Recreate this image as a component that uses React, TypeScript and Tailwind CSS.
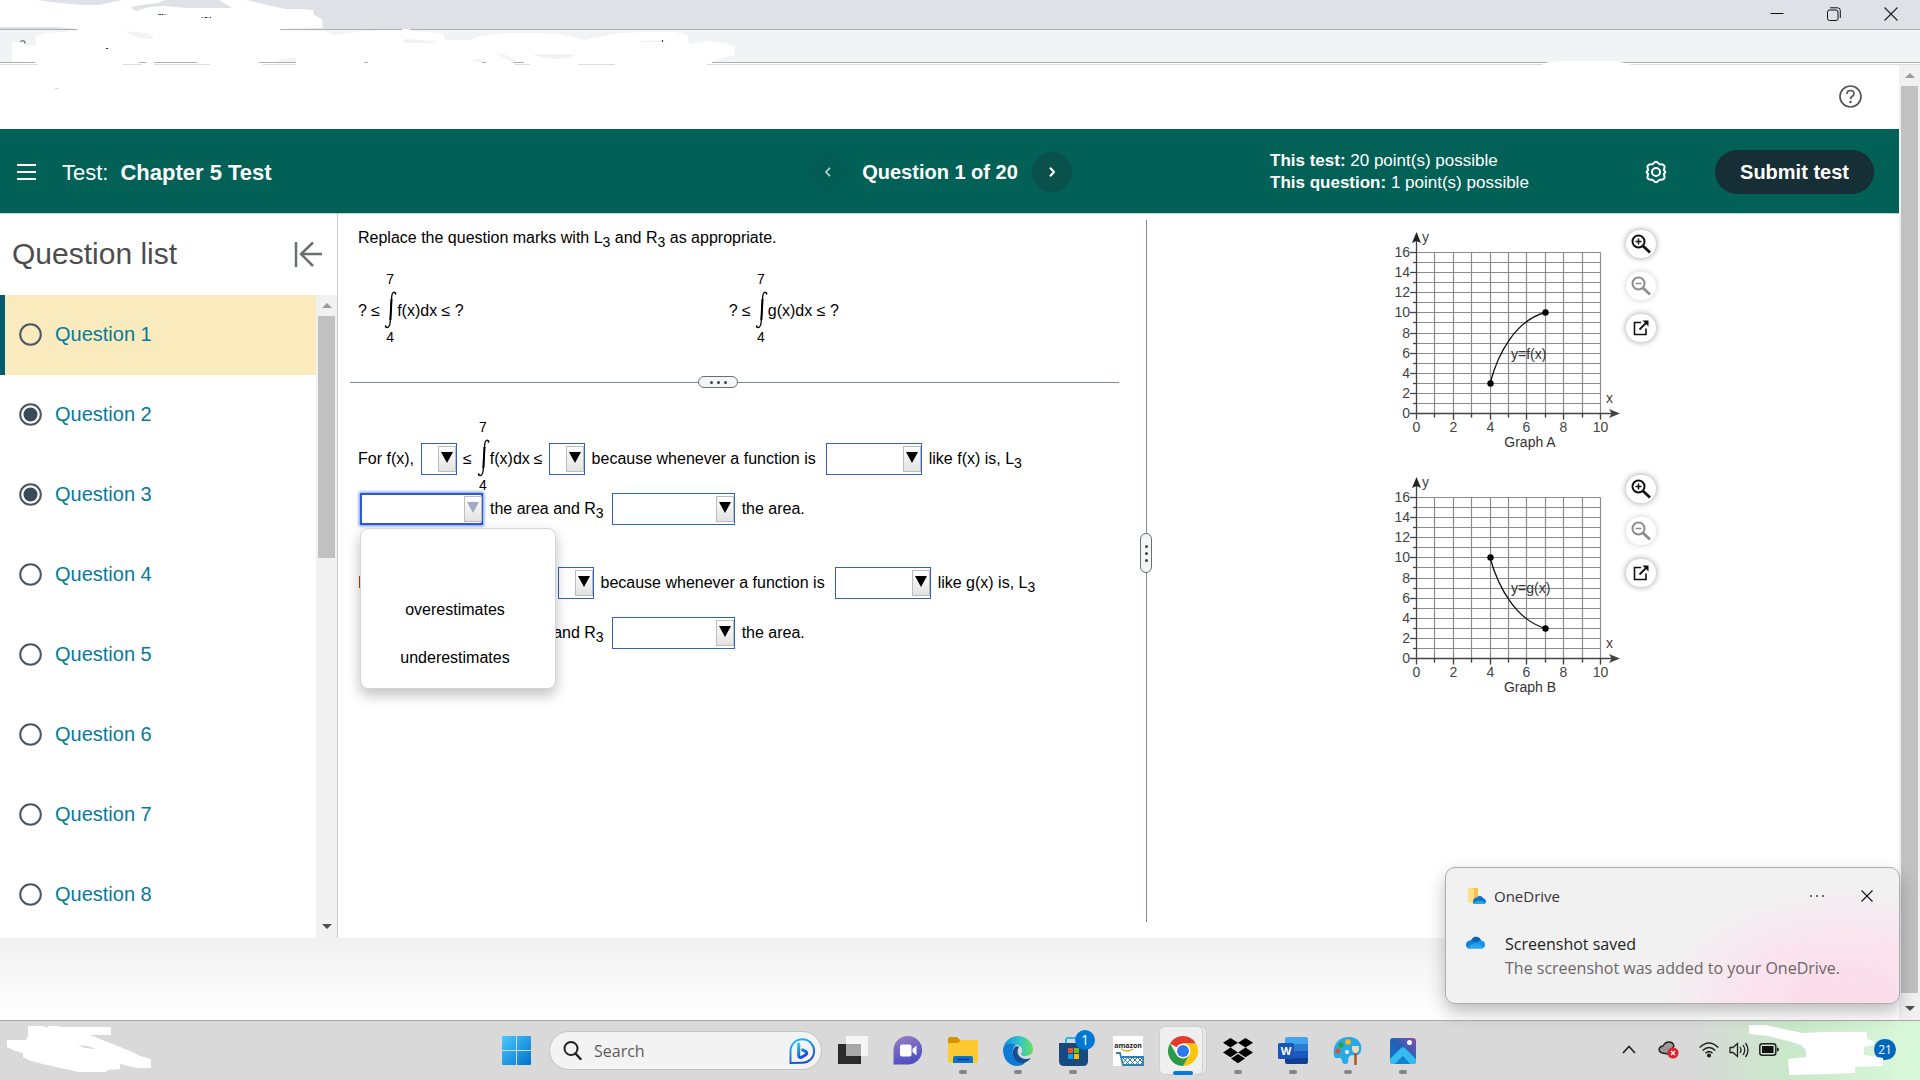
import React from "react";

const GRID_X = 18.4;
const GRID_Y = 10.06;
const X0 = 26;
const Y0 = 193;

function Integral() {
  return (
    <span className="-mt-2 flex w-3 shrink-0 flex-col items-center text-sm leading-4">
      <span className="h-[21px] leading-[18px]">7</span>
      <svg width="14" height="38" viewBox="0 0 14 38" fill="none" stroke="#000">
        <path d="M13 2.5C11-.2 9 1.600 8.700 5.500L7.200 31C6.900 36 4.600 38 2.200 35.500" strokeWidth="1.300" />
        <path d="M8.500 8L7.400 29" strokeWidth="2" />
        <circle cx="12.500" cy="2.800" r=".9" fill="#000" stroke="none" />
        <circle cx="2.700" cy="35.200" r=".9" fill="#000" stroke="none" />
      </svg>
      <span className="h-4">4</span>
    </span>
  );
}

function Sub3() {
  return <sub className="text-sm leading-[0]">3</sub>;
}

function Drop({ label, size, options = [], open = false }: { label: string; size: string; options?: string[]; open?: boolean }) {
  return (
    <span className={"relative block h-8 shrink-0 " + size}>
      <select
        aria-label={label}
        className={
          "block h-8 w-full appearance-none bg-white outline-none " +
          (open ? "border-2 border-[#2a5bd0] shadow-[0_0_3px_1px_#6f93e8]" : "border border-[#2f5fc8]")
        }
      >
        <option value=""></option>
        {options.map((o) => (
          <option key={o}>{o}</option>
        ))}
      </select>
      <span className="pointer-events-none absolute top-[3px] right-px flex h-[26px] w-[18px] items-start justify-center border border-[#bdbdbd] bg-linear-to-b from-white to-[#e2e2e2] pt-[5px]">
        <svg width="12" height="11" viewBox="0 0 12 11">
          <path d="M0 0H12L6 11Z" fill={open ? "#a3abc3" : "#000"} />
        </svg>
      </span>
    </span>
  );
}

function FunctionAnswer({ fn, open = false }: { fn: string; open?: boolean }) {
  const est = ["overestimates", "underestimates"];
  return (
    <div>
      <div className="flex h-[68px] items-center whitespace-nowrap">
        <span className="mr-[7px]">For {fn}(x),</span>
        <Drop label={"Lower bound for " + fn} size="w-9" options={["L3", "R3"]} />
        <span className="ml-1.5 mr-[5px]">≤</span>
        <Integral />
        <span className="ml-px mr-1">{fn}(x)dx</span>
        <span className="mr-1.5">≤</span>
        <Drop label={"Upper bound for " + fn} size="w-9" options={["L3", "R3"]} />
        <span className="ml-[7px] mr-2.5">because whenever a function is</span>
        <Drop label={"Behaviour of " + fn} size="w-24" options={["increasing", "decreasing"]} />
        <span className="ml-[7px]">
          like {fn}(x) is, L<Sub3 />
        </span>
      </div>
      <div className="relative flex items-center pl-0.5 whitespace-nowrap">
        <Drop label={"L3 estimate for " + fn} size="w-[123px]" options={est} open={open} />
        <span className="mr-2 ml-[7px]">
          the area and R<Sub3 />
        </span>
        <Drop label={"R3 estimate for " + fn} size="w-[123px]" options={est} />
        <span className="ml-[7px]">the area.</span>
        {open && (
          <ul
            role="listbox"
            aria-label="Estimate choices"
            className="absolute top-[35px] left-0.5 z-10 flex h-[161px] w-[196px] flex-col items-center rounded-lg border border-[#d4d4d4] bg-white pt-[57px] pr-1.5 shadow-[0_6px_14px_rgba(0,0,0,0.25)]"
          >
            <li role="option" aria-selected="false" className="flex h-12 items-center">overestimates</li>
            <li role="option" aria-selected="false" className="flex h-12 items-center">underestimates</li>
          </ul>
        )}
      </div>
    </div>
  );
}

function Graph({ name, fn, curve, start, end, labelY }: { name: string; fn: string; curve: string; start: number; end: number; labelY: number }) {
  const px = (v: number) => Math.round(X0 + v * GRID_X) + 0.5;
  const py = (v: number) => Math.round(Y0 - v * GRID_Y) + 0.5;
  const xs = Array.from({ length: 10 }, (_, i) => i + 1);
  const ys = Array.from({ length: 16 }, (_, i) => i + 1);
  return (
    <svg width="236" height="232" viewBox="0 0 236 232" role="img" aria-label={name} className="font-['Liberation_Sans',Arial,sans-serif] text-sm">
      <g stroke="#8c8c8c" strokeWidth="1.200">
        {xs.map((v) => (
          <path key={v} d={`M${px(v)} ${py(16)}V${py(0) + (v % 2 ? 4 : 6)}`} />
        ))}
        {ys.map((v) => (
          <path key={v} d={`M${v % 2 ? 23 : 20} ${py(v)}H${px(10)}`} />
        ))}
      </g>
      <g stroke="#444" strokeWidth="1.300">
        <path d={`M20 ${py(0)}H222M${px(0)} 20V${py(0) + 6}`} />
        {ys.map((v) => (
          <path key={v} d={`M${v % 2 ? 23 : 20} ${py(v)}H26`} />
        ))}
        {xs.map((v) => (
          <path key={v} d={`M${px(v)} ${py(0)}v${v % 2 ? 4 : 6}`} />
        ))}
      </g>
      <path d="M26.500 12L31 23L26.500 21L22 23Z" fill="#222" />
      <path d="M230 193.500L219 189L221.500 193.500L219 198Z" fill="#444" />
      <g fill="#444">
        {[0, 2, 4, 6, 8, 10, 12, 14, 16].map((v) => (
          <text key={v} x="20" y={py(v) + 4.5} textAnchor="end">{v}</text>
        ))}
        {[0, 2, 4, 6, 8, 10].map((v) => (
          <text key={v} x={px(v)} y="212" textAnchor="middle">{v}</text>
        ))}
        <text x="32" y="22">y</text>
        <text x="216" y="183">x</text>
      </g>
      <path d={curve} fill="none" stroke="#111" strokeWidth="1.300" />
      <circle cx={px(4)} cy={py(start)} r="3.200" />
      <circle cx={px(7)} cy={py(end)} r="3.200" />
      <text x="121" y={labelY} fill="#333">y={fn}(x)</text>
      <text x="140" y="227" textAnchor="middle" fill="#333">{name}</text>
    </svg>
  );
}

function GraphTools({ name }: { name: string }) {
  const cls = "flex h-7 w-[30px] items-center justify-center rounded-full bg-white shadow-[0_0_6px_rgba(0,0,0,0.4)]";
  const clsOff = "flex h-7 w-[30px] items-center justify-center rounded-full bg-white shadow-[0_0_6px_rgba(0,0,0,0.2)]";
  return (
    <div className="flex flex-col gap-3.5 pt-2.5">
      <button aria-label={"Zoom in on " + name} className={cls}>
        <svg width="20" height="20" viewBox="0 0 20 20" fill="none" stroke="#111">
          <circle cx="7.500" cy="7.500" r="6" strokeWidth="2" />
          <path d="M4.500 7.500h6M7.500 4.500v6" strokeWidth="1.500" />
          <path d="M12 12L19 18.500" strokeWidth="2.800" />
        </svg>
      </button>
      <button aria-label={"Zoom out of " + name} className={clsOff}>
        <svg width="20" height="20" viewBox="0 0 20 20" fill="none" stroke="#8c8c8c">
          <circle cx="7.500" cy="7.500" r="6" strokeWidth="2" />
          <path d="M4.500 7.500h6" strokeWidth="1.500" />
          <path d="M12 12L19 18.500" strokeWidth="2.800" />
        </svg>
      </button>
      <button aria-label={"Open " + name + " in a new window"} className={cls}>
        <svg width="16" height="16" viewBox="0 0 16 16" fill="none" stroke="#111">
          <path d="M8 2.500H1.500V14.500H13V8.500" strokeWidth="1.600" />
          <path d="M6.500 9.500L13 3" strokeWidth="1.800" />
          <path d="M9.500 0.500H15.500V6.500Z" fill="#111" stroke="none" />
        </svg>
      </button>
    </div>
  );
}

function ScrollBar({ thumb }: { thumb: string }) {
  return (
    <div aria-hidden="true" className="flex w-[21px] shrink-0 flex-col items-center bg-[#f1f1f1]">
      <span className="flex h-[21px] shrink-0 items-center">
        <svg width="10" height="5" viewBox="0 0 10 5"><path d="M5 0L10 5H0Z" fill="#9b9b9b" /></svg>
      </span>
      <span className={"w-[17px] bg-[#c1c1c1] " + thumb} />
      <span className="mt-auto flex h-6 shrink-0 items-center">
        <svg width="10" height="5" viewBox="0 0 10 5"><path d="M5 5L10 0H0Z" fill="#505050" /></svg>
      </span>
    </div>
  );
}

function WindowBar() {
  return (
    <div className="relative shrink-0">
      <div className="flex h-[30px] items-center justify-end border-b border-[#adb1b3] bg-[#dee1e6] pr-px pb-0.5">
        <button aria-label="Minimize" className="flex h-7 w-[57px] items-center justify-center">
          <svg width="14" height="14" viewBox="0 0 14 14" stroke="#111"><path d="M.5 6.500H13.500" /></svg>
        </button>
        <button aria-label="Restore" className="flex h-7 w-[57px] items-center justify-center">
          <svg width="14" height="14" viewBox="0 0 14 14" fill="none" stroke="#111">
            <rect x=".5" y="3" width="10.500" height="10.500" rx="2" />
            <path d="M3 .8H10.500Q13.300 .8 13.300 3.500V11" />
          </svg>
        </button>
        <button aria-label="Close" className="flex h-7 w-[57px] items-center justify-center">
          <svg width="14" height="14" viewBox="0 0 14 14" stroke="#222" strokeWidth="1.200"><path d="M.5 .5L13.500 13.500M13.500 .5L.5 13.500" /></svg>
        </button>
      </div>
      <div className="h-[33px] border-b border-[#adb1b3] bg-[#f1f3f4]" />
      <div className="h-0.5 border-b border-[#dcdcdc] bg-white" />
      <svg width="1640" height="92" viewBox="0 0 1640 92" className="pointer-events-none absolute top-0 left-0">
        <path fill="#fff" d="M0 0H36L60 3L83 5L98 5L113 2L123 0H165L158 3L134 6L131 8L136 11L150 7L165 6L185 8H232L219 0H246L263 4L285 9H300L313 10L314 15L322 19L323 28L280 29V31H78L77 29L55 27H0Z" />
        <path fill="#fff" d="M36 36L45 33L78 31L78 29H280V30L325 31L334 35L365 31L402 30V29H410L411 31L443 33L445 40H470L480 36L508 33H535L560 34L585 40L620 33L650 32H675L688 35L689 44L710 41L725 43L735 46V55L718 59L712 62L710 66H38L35 62H23L12 61V42H22L25 46L36 45Z" />
        <path fill="#f1f3f4" d="M125 31L147 33L153 37V39L140 38L130 34ZM404 39L435 41V43H404ZM532 54H576L570 58L555 59L540 57ZM495 54H503L518 61L512 62L505 58ZM640 41L665 40V42H637ZM472 60L480 59L488 63L478 62ZM280 60L290 58L296 58V62H276Z" />
        <path fill="#adb1b3" d="M0 62h23v1h-23zM139 62h7v1h-7zM154 62h43v1h-43zM259 62h37v1h-37zM364 62h4v1h-4zM482 62h4v1h-4zM513 62h11v1h-11z" />
        <path fill="#dcdcdc" d="M0 64h38v1h-38zM123 64h19v1h-19zM154 64h56v1h-56zM263 64h33v1h-33zM515 64h15v1h-15zM578 64h37v1h-37zM707 64h30v1h-30zM55 88h4v1h-4z" />
        <path fill="#bbb" d="M157 14h10v1h-10zM201 17h10v1h-10z" />
        <path fill="#333" d="M159 14h2v1h-2zM162 14h1v1h-1zM205 17h2v1h-2zM210 17h1v1h-1zM106 48h2v1h-2zM662 40h1v2h-1z" />
        <path fill="none" stroke="#777" strokeWidth="1.400" d="M20.500 42Q22.500 39.500 24.500 41.500L25 43.500" />
        <path fill="#fff" d="M1541 65L1549 62L1556 61H1618L1624 63L1632 65Z" />
      </svg>
    </div>
  );
}

function Header() {
  return (
    <header className="grid h-[85px] shrink-0 grid-cols-[1fr_auto_1fr] items-center border-b border-[#b9d3d0] bg-[#026157] pt-0.5 pr-[19px] text-white">
      <div className="flex items-center pl-[17px]">
        <button aria-label="Menu" className="mr-[26px]">
          <svg width="19" height="18" viewBox="0 0 19 18" stroke="#fff" strokeWidth="2"><path d="M0 2H19M0 9H19M0 16H19" /></svg>
        </button>
        <h1 className="flex gap-3 text-[22px]">
          <span>Test:</span>
          <b>Chapter 5 Test</b>
        </h1>
      </div>
      <nav aria-label="Question navigation" className="flex items-center">
        <button aria-label="Previous question" className="flex h-10 w-10 items-center justify-center rounded-full bg-[#045d54]">
          <svg width="6" height="10" viewBox="0 0 6 10" fill="none" stroke="#b5cfcc" strokeWidth="1.700"><path d="M5 .8L1 5L5 9.200" /></svg>
        </button>
        <b className="w-46 text-center text-xl">Question 1 of 20</b>
        <button aria-label="Next question" className="flex h-10 w-10 items-center justify-center rounded-full bg-[#0a514c]">
          <svg width="6" height="10" viewBox="0 0 6 10" fill="none" stroke="#fff" strokeWidth="2"><path d="M1 .8L5 5L1 9.200" /></svg>
        </button>
      </nav>
      <div className="flex items-center pr-1.5 pl-[198px]">
        <div className="text-[17px] leading-[22px] whitespace-nowrap">
          <p><b>This test:</b> 20 point(s) possible</p>
          <p><b>This question:</b> 1 point(s) possible</p>
        </div>
        <button aria-label="Settings" className="mr-[47px] ml-auto">
          <svg width="24" height="24" viewBox="0 0 24 24" fill="none" stroke="#fff" strokeWidth="2" strokeLinejoin="round">
            <path d="M9.500 3.500Q12 0 14.500 3.500L16 4.400Q20.500 4 20.600 6.800L19.900 10.300Q22.800 12 19.900 13.900L20.600 17.200Q20.500 20 16 19.600L14.500 20.500Q12 24 9.500 20.500L8 19.600Q3.500 20 3.400 17.200L4.100 13.900Q1.200 12 4.100 10.300L3.400 6.800Q3.500 4 8 4.400Z" />
            <circle cx="12" cy="12" r="4" />
          </svg>
        </button>
        <button className="h-11 w-[159px] shrink-0 rounded-full bg-[#162e36] text-xl font-bold">Submit test</button>
      </div>
    </header>
  );
}

function Sidebar() {
  const items = [1, 2, 3, 4, 5, 6, 7, 8];
  return (
    <aside className="flex w-[338px] shrink-0 flex-col border-r border-[#c7cad3]">
      <div className="flex h-[81px] shrink-0 items-center justify-between pr-3.5 pb-0.5 pl-3">
        <h2 className="text-[30px] text-[#4d4d4d]">Question list</h2>
        <button aria-label="Collapse question list">
          <svg width="29" height="26" viewBox="0 0 29 26" fill="none" stroke="#6a706e" strokeWidth="2.500"><path d="M2 1V26M28 13H7M19 1.500L7 13L19 25" /></svg>
        </button>
      </div>
      <div className="flex min-h-0 flex-1">
        <ul className="min-w-0 flex-1 overflow-hidden">
          {items.map((n) => (
            <li key={n} className={n === 1 ? "h-20 border-l-5 border-[#005a70] bg-[#f9ebbe]" : "h-20 border-l-5 border-transparent"}>
              <a href={"#question-" + n} className="flex h-full items-center gap-[13px] pb-0.5 pl-3.5 text-xl text-[#047a9c]">
                <svg width="23" height="23" viewBox="0 0 23 23" fill="none" stroke="#4a5663" strokeWidth="2">
                  <circle cx="11.500" cy="11.500" r="10.300" />
                  {(n === 2 || n === 3) && <circle cx="11.500" cy="11.500" r="7" fill="#3b4a59" stroke="none" />}
                </svg>
                <span>Question {n}</span>
              </a>
            </li>
          ))}
        </ul>
        <ScrollBar thumb="h-[242px]" />
      </div>
    </aside>
  );
}

function OneCloud() {
  return (
    <svg width="19" height="13" viewBox="0 0 20 13">
      <path d="M5 5Q7 0 11 .500Q15 1 16 5L10 9Z" fill="#0a61b8" />
      <path d="M0 9Q0 4.500 5 4Q8 4 11 7L4 13Q0 12.500 0 9Z" fill="#1180d8" />
      <path d="M9 7L15 4.500Q20 4.500 20 9Q20 12 17 12.500Z" fill="#1a93e8" />
      <path d="M2 12Q6 7.500 10 7L19 11.500Q18 13 16 13H4Q3 13 2 12Z" fill="#28a8ea" />
    </svg>
  );
}

function Toast() {
  return (
    <section
      aria-label="OneDrive notification"
      className="absolute right-5 bottom-[76px] z-20 h-[137px] w-[455px] rounded-[10px] border border-[#adadad] bg-[#f1f1f1] bg-[radial-gradient(ellipse_190px_110px_at_88%_95%,#fbdce8_0%,#fae3ee_50%,#f1f1f100_100%)] px-5 pt-3.5 font-['Open_Sans','Noto_Sans',sans-serif] shadow-[0_8px_18px_rgba(0,0,0,0.25)]"
    >
      <div className="flex h-7 items-center text-[15px] text-[#333]">
        <svg width="20" height="18" viewBox="0 0 20 18">
          <path d="M3 1H12V13H3Z" fill="#f3c04d" />
          <path d="M2 0L8 2V17L2 15Z" fill="#ffe08a" />
          <path d="M7 14Q8 10 11 10.500Q14 7 17 11Q20 12 20 15Q19.500 17 17.500 17H9Q6.500 17 7 14Z" fill="#0f74cf" />
          <path d="M7.500 16Q11 12 19.500 15.500Q19 17 17.500 17H9Z" fill="#28a8ea" />
        </svg>
        <span className="ml-2">OneDrive</span>
        <button aria-label="More options" className="mr-9 ml-auto">
          <svg width="16" height="4" viewBox="0 0 16 4" fill="#444"><circle cx="2" cy="2" r="1" /><circle cx="8" cy="2" r="1" /><circle cx="14" cy="2" r="1" /></svg>
        </button>
        <button aria-label="Dismiss" className="mr-1.5">
          <svg width="12" height="12" viewBox="0 0 12 12" stroke="#111" strokeWidth="1.100"><path d="M.5 .5L11.500 11.500M11.500 .5L.5 11.500" /></svg>
        </button>
      </div>
      <div className="mt-[22px] flex">
        <span className="mt-1"><OneCloud /></span>
        <div className="ml-5 text-base leading-6 whitespace-nowrap">
          <p className="text-[#222]">Screenshot saved</p>
          <p className="text-[#6b6668]">The screenshot was added to your OneDrive.</p>
        </div>
      </div>
    </section>
  );
}

function TaskButton({ label, dot = true, children }: { label: string; dot?: boolean; children: React.ReactNode }) {
  return (
    <button aria-label={label} className="flex h-[59px] w-[55px] flex-col items-center pt-[15px]">
      <svg width="30" height="30" viewBox="0 0 30 30" className="overflow-visible">{children}</svg>
      {dot && <span className="mt-1 h-1 w-2 rounded-full bg-[#858585]" />}
    </button>
  );
}

function Taskbar() {
  return (
    <footer className="relative grid h-[60px] shrink-0 grid-cols-[1fr_auto_1fr] border-t border-[#a9acab] bg-[#d9d9d9] bg-[linear-gradient(90deg,#d9d9d900_1690px,#c9e8c9_1790px,#d8f7d8_1900px)] font-['Open_Sans','Noto_Sans',sans-serif]">
      <svg width="160" height="58" viewBox="0 0 160 58">
        <path fill="#fff" d="M28 5H43L47 7L48 5H59V6H111V14H90L110 22L135 32L140 35L151 38V47H137L120 43V48L108 49L106 51H79L65 48L43 43L31 40L23 36V32L15 30L7 26V19H26L28 15Z" />
        <path fill="#d9d9d9" d="M78 24L88 25L96 28L85 27Z" />
      </svg>
      <div className="flex pr-0.5">
        <button aria-label="Start" className="flex h-[59px] w-[29px] items-center">
          <svg width="29" height="29" viewBox="0 0 29 29">
            <defs><linearGradient id="win" x2="1" y2="1"><stop stopColor="#4cc9ff" /><stop offset="1" stopColor="#0071cd" /></linearGradient></defs>
            <path fill="url(#win)" d="M1 0H14V14H0V1Q0 0 1 0ZM15 0H28Q29 0 29 1V14H15ZM0 15H14V29H1Q0 29 0 28ZM15 15H29V28Q29 29 28 29H15Z" />
          </svg>
        </button>
        <label className="mr-[3px] ml-[18px] flex h-[39px] w-[273px] items-center self-center rounded-full border border-[#c2c2c2] bg-[#f3f3f3] pr-1.5 pl-[13px]">
          <svg width="19" height="19" viewBox="0 0 19 19" fill="none" stroke="#222" strokeWidth="2"><circle cx="8" cy="7.500" r="6.500" /><path d="M12.500 12.500L17.500 18" strokeWidth="2.500" strokeLinecap="round" /></svg>
          <input aria-label="Search" placeholder="Search" className="ml-3 min-w-0 flex-1 bg-transparent text-base outline-none placeholder:text-[#5c5c5c]" />
          <svg width="26" height="26" viewBox="0 0 26 26" fill="none">
            <defs><linearGradient id="bing" x2=".4" y2="1"><stop stopColor="#22c9f0" /><stop offset="1" stopColor="#1b4bd6" /></linearGradient></defs>
            <path d="M1.500 25V13A11.800 11.800 0 1 1 13 24.800Z" stroke="url(#bing)" strokeWidth="1.900" />
            <path d="M9.700 6V17.500Q10 20 12.500 19.300L16.500 17Q19 15 16.500 13.300L13.500 11.800" stroke="url(#bing)" strokeWidth="3" strokeLinecap="round" strokeLinejoin="round" />
          </svg>
        </label>
        <TaskButton label="Task view" dot={false}>
          <rect y="8" width="23" height="20" fill="#2b2b2b" />
          <rect x="8" width="22" height="20" fill="#fafafa" opacity=".85" />
          <rect x="8" y="8" width="15" height="12" fill="#a9a9a9" />
        </TaskButton>
        <TaskButton label="Chat" dot={false}>
          <defs><linearGradient id="chat" x2=".3" y2="1"><stop stopColor="#9a7fc0" /><stop offset="1" stopColor="#4f50c4" /></linearGradient></defs>
          <path d="M.500 28V14A14.300 14.300 0 1 1 15 28.500H2Q.500 29 .500 28Z" fill="url(#chat)" />
          <rect x="7" y="8.500" width="11.500" height="12" rx="2" fill="#fff" />
          <path d="M19.500 13L23.500 9.500V19.500L19.500 16Z" fill="#fff" />
        </TaskButton>
        <TaskButton label="File Explorer">
          <path d="M0 3Q0 1 2 1H9L12 4V9H0Z" fill="#d99200" />
          <path d="M0 7L10 7L13 4H30V25Q30 27 28 27H2Q0 27 0 25Z" fill="#ffc933" />
          <path d="M5 27V22Q5 20 7 20H23Q25 20 25 22V27Z" fill="#0c72cd" />
          <path d="M9 23.500H21" stroke="#063f86" strokeWidth="1.500" />
        </TaskButton>
        <TaskButton label="Microsoft Edge">
          <defs><linearGradient id="edge" x2="1"><stop stopColor="#138fdb" /><stop offset=".6" stopColor="#35c7c7" /><stop offset="1" stopColor="#6be04e" /></linearGradient></defs>
          <path d="M0 14C1 4 9 0 15 0C23 0 30 6 30 13C30 18 26 20 22 20C18 20 17 18 19 16C20 12 17 9 13 9C7 9 2 11 0 14Z" fill="url(#edge)" />
          <path d="M0 14C2 7 8 7 13 9C10 11 9 15 10 19C12 25 18 28 23 26C20 29 17 30 14 30C6 30 0 23 0 14Z" fill="#0d7bd4" />
          <path d="M13 10C9 13 9 18 11 22C14 28 21 30 28 22C23 24 17 23 15 18C14 15 15 13 16 11Z" fill="#154f92" />
        </TaskButton>
        <TaskButton label="Microsoft Store">
          <path d="M8 8V4Q8 2 10 2H20Q22 2 22 4V8" fill="none" stroke="#29b8ec" strokeWidth="2" />
          <path d="M1 7H30V25Q30 30 25 30H6Q1 30 1 25Z" fill="#174a80" />
          <path d="M10 12h5v5h-5z" fill="#f25022" /><path d="M16 12h5v5h-5z" fill="#7fba00" />
          <path d="M10 18h5v5h-5z" fill="#00a4ef" /><path d="M16 18h5v5h-5z" fill="#ffb900" />
          <circle cx="27" cy="4" r="10" fill="#0078d4" />
          <text x="27" y="9" textAnchor="middle" fontSize="14" fill="#fff">1</text>
        </TaskButton>
        <TaskButton label="Amazon" dot={false}>
          <rect width="30" height="30" fill="#fff" />
          <text x="15" y="12" textAnchor="middle" fontSize="7" fontWeight="700" fill="#222">amazon</text>
          <path d="M8 13Q14 17 20 13" fill="none" stroke="#f39a2b" strokeWidth="1.300" />
          <path d="M3 17H7L10 29H30V21H8" fill="none" stroke="#2d7fb5" strokeWidth="1.800" />
          <path d="M9 21L17 29M14 21L22 29M19 21L27 29M24 21L30 27M15 21L10 27M20 21L12 29M25 21L17 29M30 21L22 29M30 26L27 29" stroke="#2d7fb5" />
        </TaskButton>
        <span className="relative">
          <span className="absolute top-[5px] left-[9px] h-[49px] w-[43px] rounded-md border border-[#ccc] bg-[#e6e6e6]" />
          <span className="absolute top-[5px] left-1 h-[49px] w-[44px] rounded-md border border-[#d0d0d0] bg-[#efefef]" />
          <span className="absolute top-[50px] left-[18px] h-1 w-5 rounded-full bg-[#0a78d4]" />
          <span className="relative block">
            <TaskButton label="Google Chrome" dot={false}>
              <path d="M15 15L2 7.500A15 15 0 0 1 28 7.500H15Z" fill="#e33b2e" />
              <path d="M15 15V7.500H28A15 15 0 0 1 15 30L21.500 18.700Z" fill="#fdc60a" />
              <path d="M15 15L21.500 18.700L15 30A15 15 0 0 1 2 7.500L8.500 18.700Z" fill="#2c9a4b" />
              <circle cx="15" cy="15" r="7.500" fill="#fff" /><circle cx="15" cy="15" r="6" fill="#2f78ea" />
            </TaskButton>
          </span>
        </span>
        <TaskButton label="Dropbox">
          <path d="M7.500 2L15 6.800L7.500 11.600L0 6.800ZM22.500 2L30 6.800L22.500 11.600L15 6.800ZM7.500 11.600L15 16.400L7.500 21.200L0 16.400ZM22.500 11.600L30 16.400L22.500 21.200L15 16.400ZM15 18L22 22.600L15 27.300L8 22.600Z" fill="#000" />
        </TaskButton>
        <TaskButton label="Word">
          <path d="M7 3Q7 1 9 1H28Q30 1 30 3V8H7Z" fill="#41a5ee" /><path d="M7 8H30V15H7Z" fill="#2b7cd3" /><path d="M7 15H30V22H7Z" fill="#185abd" /><path d="M7 22H30V26Q30 28 28 28H9Q7 28 7 26Z" fill="#103f91" />
          <rect y="7" width="16" height="16" rx="1.500" fill="#1a54b5" />
          <text x="8" y="19" textAnchor="middle" fontSize="11" fontWeight="700" fill="#fff">W</text>
        </TaskButton>
        <TaskButton label="Paint">
          <path d="M1 20C-1 8 6 1 16 1C25 1 30 8 28 15C26 22 20 18 17 20C13 23 18 28 12 28C8 28 10 23 7 22C4 21 3 24 1 20Z" fill="#27a9e8" />
          <circle cx="15" cy="6" r="2.800" fill="#fdb813" /><circle cx="8" cy="9" r="2.500" fill="#29a329" /><circle cx="5" cy="15" r="2.500" fill="#d9502e" /><circle cx="14" cy="16" r="2" fill="#f3f3f3" />
          <path d="M19 10H26V14L24 17H21L19 14Z" fill="#efd9b4" /><path d="M21.300 17H23.700V29H21.300Z" fill="#a8541b" />
        </TaskButton>
        <span className="-mr-3.5">
          <TaskButton label="Photos">
            <defs><linearGradient id="ph" x1="0" y1="1" x2="1" y2="0"><stop stopColor="#1478cf" /><stop offset=".5" stopColor="#1f62b5" /><stop offset="1" stopColor="#8b4fb0" /></linearGradient></defs>
            <rect x="2" y="2" width="26" height="26" rx="3" fill="url(#ph)" />
            <path d="M2 23L13 12Q15 10.500 17 12L28 23V25Q28 28 25 28H22L15 20L7 28H5Q2 28 2 25Z" fill="#35bdf2" />
            <path d="M7 28L15 20L22 28Z" fill="#1482d4" /><circle cx="21.500" cy="6.500" r="2.500" fill="#fff" />
          </TaskButton>
        </span>
      </div>
      <div className="flex items-center justify-end pr-6 pb-0.5">
        <button aria-label="Show hidden icons" className="mr-[22px]"><svg width="14" height="9" viewBox="0 0 14 9" fill="none" stroke="#222" strokeWidth="1.700"><path d="M1 8L7 1.500L13 8" /></svg></button>
        <button aria-label="OneDrive sync error" className="mr-5">
          <svg width="21" height="18" viewBox="0 0 21 18"><path d="M4 12Q1 11 1 8Q2 5 5 5Q7 1 11 1Q15 1 16 5L10 13Z" fill="#999" stroke="#222" strokeWidth="1.300" /><circle cx="15" cy="12" r="5.600" fill="#d9252c" /><path d="M13 10L17 14M17 10L13 14" stroke="#fff" strokeWidth="1.300" /></svg>
        </button>
        <button aria-label="Network" className="mr-2.5">
          <svg width="20" height="16" viewBox="0 0 20 16" fill="none" stroke="#222" strokeWidth="1.500"><path d="M.700 5.500Q10-3.500 19.300 5.500M3.700 8.500Q10 2.500 16.300 8.500M6.500 11.300Q10 8 13.500 11.300" /><circle cx="10" cy="13.500" r="1.300" fill="#222" /></svg>
        </button>
        <button aria-label="Volume" className="mr-2.5">
          <svg width="20" height="16" viewBox="0 0 20 16" fill="none" stroke="#222" strokeWidth="1.300"><path d="M1 5.500H4L8.500 1.500V14.500L4 10.500H1ZM11 5Q13 8 11 11M14 3Q17.500 8 14 13M16.500 1Q21.500 8 16.500 15" /></svg>
        </button>
        <button aria-label="Battery">
          <svg width="20" height="13" viewBox="0 0 20 13"><rect x=".8" y=".8" width="16" height="11.400" rx="2.500" fill="none" stroke="#222" strokeWidth="1.500" /><rect x="3" y="3" width="11.500" height="7" fill="#111" /><path d="M18 4.500Q20 4.500 20 6.500Q20 8.500 18 8.500Z" fill="#222" /></svg>
        </button>
        <span className="relative ml-[95px] flex h-[21px] w-[22px] items-center justify-center rounded-full bg-[#0067c0] text-xs text-white">21</span>
      </div>
      <svg width="136" height="52" viewBox="0 0 136 52" className="pointer-events-none absolute top-1 right-9">
        <path fill="#fff" d="M1 0H18L35 4L55 8L77 7H119V14L126 16V20L116 22V30L135 33V41L107 42V48L80 49L41 50V46L40 34L58 32V25L53 20L40 16L20 11L1 9Z" />
      </svg>
    </footer>
  );
}

export default function App() {
  return (
    <div className="relative flex h-screen min-h-[700px] flex-col overflow-hidden bg-white font-['Liberation_Sans',Arial,sans-serif] text-black">
      <WindowBar />
      <div className="flex min-h-0 flex-1">
        <div className="flex min-w-0 flex-1 flex-col">
          <div className="flex h-16 shrink-0 items-center justify-end pr-[37px] pb-0.5">
            <button aria-label="Help">
              <svg width="23" height="23" viewBox="0 0 23 23" fill="none" stroke="#555" strokeWidth="1.700">
                <circle cx="11.500" cy="11.500" r="10.500" />
                <path d="M8 9Q8 5.500 11.500 5.500Q15 5.500 15 8.500Q15 10.300 13 11.500Q11.500 12.500 11.500 14.300" />
                <circle cx="11.500" cy="17" r=".5" />
              </svg>
            </button>
          </div>
          <Header />
          <div className="flex min-h-0 flex-1">
            <Sidebar />
            <main className="flex min-w-0 flex-1">
              <div className="w-[51.4%] min-w-0 pt-3 pr-[21px] pl-3">
                <p className="px-2 leading-6">
                  Replace the question marks with L<Sub3 /> and R<Sub3 /> as appropriate.
                </p>
                <div className="mt-[27px] grid grid-cols-2 pr-5 pl-2">
                  {["f", "g"].map((fn) => (
                    <div key={fn} className="flex h-[68px] items-center">
                      <span className="mr-1">? ≤</span>
                      <Integral />
                      <span className="ml-px">{fn}(x)dx ≤ ?</span>
                    </div>
                  ))}
                </div>
                <div className="mt-[31px] flex h-3 items-center">
                  <span className="h-px w-[348px] bg-[#8189a0]" />
                  <button aria-label="Resize panels" className="flex h-3 w-10 items-center justify-center gap-1 rounded-full border border-[#6a7070] bg-[#f4f5f7]">
                    <i className="h-[3px] w-[3px] rounded-full bg-[#444]" />
                    <i className="h-[3px] w-[3px] rounded-full bg-[#444]" />
                    <i className="h-[3px] w-[3px] rounded-full bg-[#444]" />
                  </button>
                  <span className="h-px flex-1 bg-[#8189a0]" />
                </div>
                <div className="mt-[37px] flex flex-col gap-6 pl-2">
                  <FunctionAnswer fn="f" open />
                  <FunctionAnswer fn="g" />
                </div>
              </div>
              <div className="flex w-3 shrink-0 flex-col items-center pt-1.5 pb-4">
                <span className="w-px flex-[313] bg-[#8189a0]" />
                <button aria-label="Resize columns" className="flex h-10 w-3 flex-col items-center justify-center gap-1 rounded-full border border-[#6a7070] bg-[#f4f5f7]">
                  <i className="h-[3px] w-[3px] rounded-full bg-[#444]" />
                  <i className="h-[3px] w-[3px] rounded-full bg-[#444]" />
                  <i className="h-[3px] w-[3px] rounded-full bg-[#444]" />
                </button>
                <span className="w-px flex-[349] bg-[#8189a0]" />
              </div>
              <div className="flex flex-1 flex-col items-center gap-[13px] pt-1.5 pr-1.5">
                <div className="flex">
                  <Graph name="Graph A" fn="f" curve="M100 163.500C108 133 126 100 155.500 92.500" start={3} end={10} labelY={139} />
                  <GraphTools name="Graph A" />
                </div>
                <div className="flex">
                  <Graph name="Graph B" fn="g" curve="M100 92.500C108 122 126 155 155.500 163.500" start={10} end={3} labelY={128} />
                  <GraphTools name="Graph B" />
                </div>
              </div>
            </main>
          </div>
          <div className="h-[82px] shrink-0 bg-linear-to-b from-[#f1f1f1] to-white" />
        </div>
        <ScrollBar thumb="h-[907px]" />
      </div>
      <Taskbar />
      <Toast />
    </div>
  );
}
